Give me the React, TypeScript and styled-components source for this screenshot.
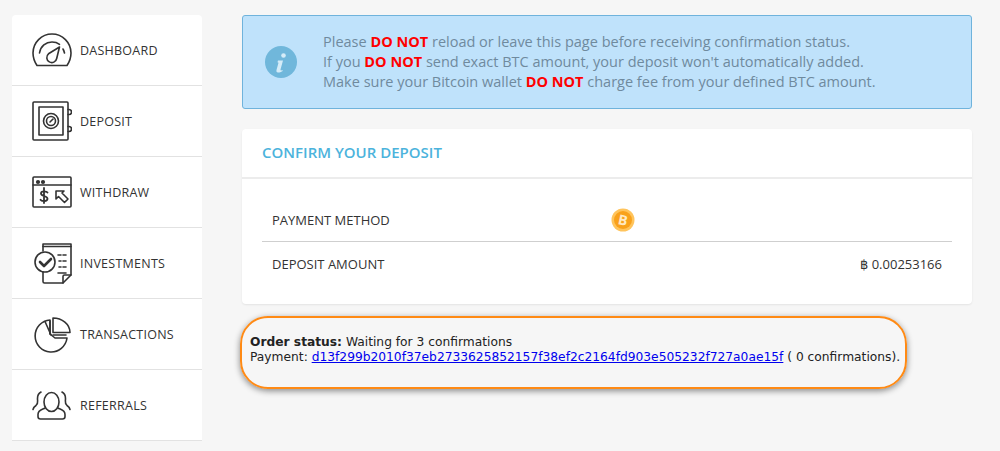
import React from "react";
import styled, { createGlobalStyle } from "styled-components";

const Global = createGlobalStyle`
  html, body { margin: 0; padding: 0; height: 451px; overflow: hidden; background: #f6f6f6; }
  body { font-family: "Open Sans", sans-serif; }
`;

const Page = styled.div`
  display: flex;
  align-items: flex-start;
  gap: 40px;
  padding: 15px 28px 0 12px;
  height: 436px;
  overflow: hidden;
`;

const Sidebar = styled.nav`
  width: 190px;
  flex: none;
  background: #fff;
  border-radius: 4px 4px 0 0;
`;

const NavRow = styled.a`
  display: flex;
  align-items: center;
  height: 70px;
  padding-left: 20px;
  gap: 8px;
  border-bottom: 1px solid #e2e2e2;
  color: #333;
  font-size: 12.5px;
  font-weight: 500;
  letter-spacing: 0.25px;
  text-transform: uppercase;
`;

const NavIcon = styled.svg`
  width: 40px;
  height: 44px;
  flex: none;
  fill: none;
  stroke: #333;
  stroke-width: 1.6;
  stroke-linecap: round;
  stroke-linejoin: round;
`;

const Main = styled.main`
  width: 730px;
  flex: none;
`;

const Alert = styled.div`
  box-sizing: border-box;
  height: 94px;
  display: flex;
  align-items: center;
  gap: 26px;
  padding-left: 22px;
  background: #bfe2fb;
  border: 1px solid #6fb3dc;
  border-radius: 3px;
  color: #6f8a9e;
  font-size: 14.5px;
  line-height: 20px;
`;

const InfoDisc = styled.svg`
  width: 32px;
  height: 32px;
  flex: none;
`;

const Strong = styled.b`
  color: #f00;
  font-weight: 700;
`;

const Card = styled.section`
  margin-top: 20px;
  height: 175px;
  background: #fff;
  border-radius: 4px;
  box-shadow: 0 1px 2px rgba(0, 0, 0, 0.08);
`;

const CardTitle = styled.h2`
  margin: 0;
  box-sizing: border-box;
  height: 50px;
  padding: 0 20px 2px;
  display: flex;
  align-items: center;
  border-bottom: 2px solid #ececec;
  color: #4cb3dc;
  font-size: 15px;
  font-weight: 600;
  text-transform: uppercase;
`;

const CardBody = styled.div`
  padding: 20px 20px 0;
`;

const Row = styled.div<{ $line?: boolean }>`
  display: flex;
  align-items: center;
  box-sizing: border-box;
  height: 43px;
  padding: 0 10px;
  color: #333;
  font-size: 13px;
  border-bottom: ${(p) => (p.$line ? "1px solid #cfcfcf" : "none")};
`;

const RowLabel = styled.div`
  width: 339px;
  font-weight: 500;
  text-transform: uppercase;
`;

const RowValue = styled.div`
  margin-left: auto;
`;

const Status = styled.div`
  box-sizing: border-box;
  margin: 12px 0 0 -2px;
  width: 667px;
  height: 73px;
  padding: 17px 8px 0;
  border: 2px solid #ff8a14;
  border-radius: 28px;
  box-shadow: 0 2px 6px rgba(0, 0, 0, 0.45);
  color: #222;
  font-family: "DejaVu Sans", Verdana, sans-serif;
  font-size: 12.25px;
  line-height: 15px;
  white-space: nowrap;
`;

const StatusLink = styled.a`
  color: #0000ee;
  text-decoration: underline;
`;

const Dashboard = () => (
  <NavIcon viewBox="0 0 40 44">
    <path d="M5 37.500H35C38 33 39 29 39 25 39 14.500 30.500 6 20 6S1 14.500 1 25C1 29 2 33 5 37.500z" />
    <path d="M7.500 25C8.500 18 14 14 20 14c3 0 5.500 .8 7.500 2.300M31 21c.8 1.300 1.200 2.700 1.500 4" />
    <path d="M27.500 19l-2.800 11.500a5 5 0 1 1-8.200-4.700z" />
  </NavIcon>
);
const Deposit = () => (
  <NavIcon viewBox="0 0 40 44">
    <rect x="1" y="3" width="35" height="38" rx="1" />
    <rect x="7" y="8" width="24" height="28" />
    <circle cx="19" cy="22" r="7.500" />
    <circle cx="19" cy="22" r="4.500" />
    <path d="M18 23l3-3" />
    <path d="M36 10.500h1a2.500 2.500 0 0 1 0 5h-1M36 27.500h1a2.500 2.500 0 0 1 0 5h-1" />
  </NavIcon>
);
const Withdraw = () => (
  <NavIcon viewBox="0 0 40 44">
    <rect x="1" y="7" width="38" height="30" rx="1" />
    <path d="M1 15h38" />
    <circle cx="6" cy="12" r="1.300" fill="#333" />
    <circle cx="11" cy="12" r="1.300" fill="#333" />
    <path d="M15.500 22.500c-1-1.500-6.500-1.800-6.500 1 0 3 6.500 2 6.500 5.200 0 3-6 2.800-7 1M12 18v15" strokeWidth="1.800" />
    <path d="M24 21h8l-2 2 6 6-3.500 3.500-6-6-2.500 2.500z" />
  </NavIcon>
);
const Investments = () => (
  <NavIcon viewBox="0 0 40 44">
    <path d="M11 10V3h28v31l-8 8H12.500a1.500 1.500 0 0 1-1.500-1.500V31" />
    <path d="M11 5.500h28" />
    <path d="M39 34h-6.500a1.500 1.500 0 0 0-1.500 1.500V42" />
    <circle cx="13" cy="21" r="10" />
    <path d="M8 21l4 4 7-7" strokeWidth="2.600" />
    <path d="M26 14h3M31 14h3M27 20h2M31 20h3M27 26h2M31 26h3M26 32h8" />
  </NavIcon>
);
const Transactions = () => (
  <NavIcon viewBox="0 0 40 44">
    <path d="M18 8A16 16 0 1 0 35 26H23L18 22z" />
    <path d="M13 9.500L19 23" />
    <path d="M21 6C30 6 38 12 38 20.500H21z" />
    <path d="M18 9v13M21 23h13" />
  </NavIcon>
);
const Referrals = () => (
  <NavIcon viewBox="0 0 40 44">
    <ellipse cx="19.500" cy="19" rx="7.500" ry="9.500" />
    <path d="M13 25c-2 1.500-7 1.500-7 6.500v2c0 1.500 1 2.500 2.500 2.500h22c1.500 0 2.500-1 2.500-2.500v-2c0-5-5-5-7-6.500" />
    <path d="M9 9c-3 1.500-3.500 4-3.500 6.500 0 3.500 1 5-1.500 7-1.500 1-2.500 2-3 4M30 9c3 1.500 3.500 4 3.500 6.500 0 3.500-1 5 1.500 7 1.500 1 2.500 2 3 4" />
  </NavIcon>
);

const items: [string, React.FC][] = [
  ["Dashboard", Dashboard],
  ["Deposit", Deposit],
  ["Withdraw", Withdraw],
  ["Investments", Investments],
  ["Transactions", Transactions],
  ["Referrals", Referrals],
];

export default function App() {
  return (
    <>
      <Global />
      <Page>
        <Sidebar>
          {items.map(([label, Icon]) => (
            <NavRow key={label}>
              <Icon />
              {label}
            </NavRow>
          ))}
        </Sidebar>
        <Main>
          <Alert>
            <InfoDisc viewBox="0 0 32 32">
              <circle cx="16" cy="16" r="16" fill="#70b7db" />
              <circle cx="18.500" cy="9.500" r="2.300" fill="#d5ecf8" />
              <path d="M13 14.500h5l-2.500 9c-.2 1 .6 1.200 2.200.4l-.3 1.300c-1.800 1-3.200 1.300-4.400 1.200-1.500-.2-1.800-1.200-1.500-2.500l2-7.200-1-.4z" fill="#d5ecf8" />
            </InfoDisc>
            <div>
              Please <Strong>DO NOT</Strong> reload or leave this page before receiving confirmation status.
              <br />
              If you <Strong>DO NOT</Strong> send exact BTC amount, your deposit won't automatically added.
              <br />
              Make sure your Bitcoin wallet <Strong>DO NOT</Strong> charge fee from your defined BTC amount.
            </div>
          </Alert>
          <Card>
            <CardTitle>Confirm your deposit</CardTitle>
            <CardBody>
              <Row $line>
                <RowLabel>Payment Method</RowLabel>
                <svg width="24" height="24" viewBox="0 0 24 24">
                  <circle cx="12" cy="12" r="11.500" fill="#ffc45c" />
                  <circle cx="12" cy="12" r="9" fill="#f9a11b" />
                  <text x="12" y="17" textAnchor="middle" fontFamily="Open Sans" fontSize="14" fontWeight="700" fill="#ffe9c2" transform="rotate(12 12 12)">B</text>
                </svg>
              </Row>
              <Row>
                <RowLabel>Deposit Amount</RowLabel>
                <RowValue>฿ 0.00253166</RowValue>
              </Row>
            </CardBody>
          </Card>
          <Status>
            <b>Order status:</b> Waiting for 3 confirmations
            <br />
            Payment: <StatusLink href="#">d13f299b2010f37eb2733625852157f38ef2c2164fd903e505232f727a0ae15f</StatusLink> ( 0 confirmations).
          </Status>
        </Main>
      </Page>
    </>
  );
}
